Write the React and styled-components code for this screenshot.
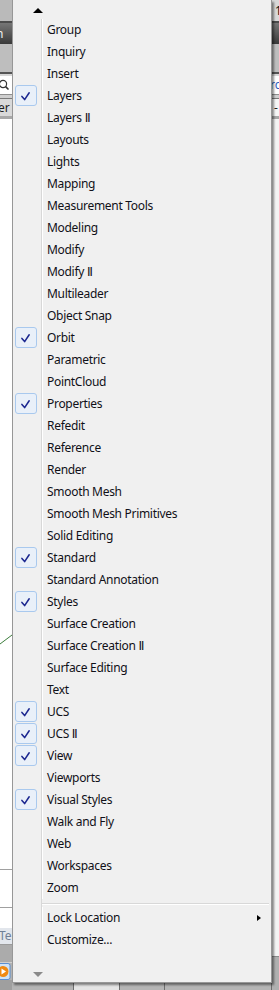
import styled, { createGlobalStyle } from 'styled-components'

const GlobalStyle = createGlobalStyle`
  html, body { margin: 0; padding: 0; background: #c4c4c4; }
  body { overflow: hidden; }
`

const Screen = styled.div`
  position: relative;
  width: 279px;
  height: 990px;
  display: flex;
  overflow: hidden;
  font-family: "Noto Sans", "DejaVu Sans", sans-serif;
`

const Strip = styled.div`
  width: ${p => p.$w}px;
  flex: none;
  display: flex;
  flex-direction: column;
  background: #fff;
  overflow: hidden;
`

const Band = styled.div`
  flex: ${p => (p.$h ? 'none' : '1')};
  height: ${p => (p.$h ? `${p.$h}px` : 'auto')};
  background: ${p => p.$bg || '#fff'};
  border-bottom: ${p => (p.$line ? `1px solid ${p.$line}` : 'none')};
  position: relative;
  overflow: hidden;
  display: flex;
  align-items: center;
  font-size: 12px;
  white-space: nowrap;
  color: ${p => p.$ink || '#222'};
`

const Clip = styled.span`
  margin-left: ${p => p.$shift || 0}px;
  line-height: 1;
`

const Middle = styled.div`
  flex: 1;
  display: flex;
  flex-direction: column;
`

const Workspace = styled.div`
  flex: 1;
  background: #fff;
`

const StatusBar = styled.div`
  height: 7px;
  display: flex;
  background: #b4b4b4;
`

const StatusCell = styled.div`
  width: ${p => p.$w}px;
  flex: ${p => (p.$w ? 'none' : '1')};
  background: ${p => p.$bg || '#b4b4b4'};
  border-right: 1px solid #6e6e6e;
`

const Menu = styled.div`
  position: absolute;
  left: 12px;
  top: 0;
  width: 260px;
  height: 983px;
  box-sizing: border-box;
  background: #f0f0f0;
  border: 1px solid #979797;
  border-top: none;
  box-shadow: 2px 2px 2px rgba(0, 0, 0, 0.45);
  display: flex;
  flex-direction: column;
  color: #101018;
`

const ScrollZone = styled.div`
  height: ${p => p.$h}px;
  flex: ${p => (p.$grow ? '1' : 'none')};
  display: flex;
  align-items: flex-start;
  padding-left: 20px;
  padding-top: ${p => p.$pad}px;
  box-sizing: border-box;
`

const Arrow = styled.div`
  width: 0;
  height: 0;
  border-left: 5px solid transparent;
  border-right: 5px solid transparent;
  ${p =>
    p.$up
      ? 'border-bottom: 5px solid #000;'
      : 'border-top: 5px solid #8a8a8a;'}
`

const List = styled.div`
  display: flex;
  flex-direction: column;
`

const Row = styled.div`
  height: ${p => p.$h || 22}px;
  display: flex;
`

const Gutter = styled.div`
  width: 28px;
  flex: none;
  border-right: 1px solid #d8d8d8;
  display: flex;
  align-items: flex-start;
`

const CheckBox = styled.div`
  margin-left: 2px;
  width: 22px;
  height: 21px;
  box-sizing: border-box;
  border: 1px solid #a9c9ee;
  border-radius: 3px;
  background: #e9f0f9;
  display: flex;
  align-items: center;
  justify-content: center;
`

const Label = styled.div`
  flex: 1;
  display: flex;
  align-items: center;
  padding-left: 5px;
  box-shadow: inset 1px 0 0 #fff;
  font-size: 12px;
  letter-spacing: -0.3px;
  line-height: 22px;
  white-space: nowrap;
`

const Text = styled.span`
  flex: 1;
`

const SubArrow = styled.div`
  width: 0;
  height: 0;
  margin-right: 10px;
  border-top: 3.5px solid transparent;
  border-bottom: 3.5px solid transparent;
  border-left: 4px solid #000;
`

const SepLine = styled.div`
  flex: 1;
  margin: 4px 2px 0 0;
  height: 0;
  border-top: 1px solid #d8d8d8;
  border-bottom: 1px solid #fff;
  box-shadow: inset 1px 0 0 #fff;
`

const items = [
  ['Group'], ['Inquiry'], ['Insert'], ['Layers', true], ['Layers Ⅱ'],
  ['Layouts'], ['Lights'], ['Mapping'], ['Measurement Tools'], ['Modeling'],
  ['Modify'], ['Modify Ⅱ'], ['Multileader'], ['Object Snap'], ['Orbit', true],
  ['Parametric'], ['PointCloud'], ['Properties', true], ['Refedit'], ['Reference'],
  ['Render'], ['Smooth Mesh'], ['Smooth Mesh Primitives'], ['Solid Editing'], ['Standard', true],
  ['Standard Annotation'], ['Styles', true], ['Surface Creation'], ['Surface Creation Ⅱ'], ['Surface Editing'],
  ['Text'], ['UCS', true], ['UCS Ⅱ', true], ['View', true], ['Viewports'],
  ['Visual Styles', true], ['Walk and Fly'], ['Web'], ['Workspaces'], ['Zoom'],
]

function Tick() {
  return (
    <svg width="22" height="21" viewBox="0 0 22 21">
      <path d="M6.5 11.5 L9.5 15 L14.5 7.5" fill="none" stroke="#1b2790" strokeWidth="1.7" strokeLinecap="round" strokeLinejoin="round" />
    </svg>
  )
}

function MenuRow({ label, checked, sub }) {
  return (
    <Row>
      <Gutter>{checked && <CheckBox><Tick /></CheckBox>}</Gutter>
      <Label>
        <Text>{label}</Text>
        {sub && <SubArrow />}
      </Label>
    </Row>
  )
}

function Magnifier() {
  return (
    <svg width="12" height="16" viewBox="0 0 12 16">
      <circle cx="3" cy="7" r="3.6" fill="none" stroke="#333" strokeWidth="1.2" />
      <path d="M5.6 9.6 L8.5 12.5" stroke="#333" strokeWidth="1.6" />
    </svg>
  )
}

function PlayIcon() {
  return (
    <svg width="12" height="17" viewBox="0 0 12 17">
      <rect x="-4" y="0.5" width="14" height="16" rx="2" fill="#cfe3f7" stroke="#5b8fd0" />
      <circle cx="3" cy="8.5" r="5.5" fill="#f08a12" />
      <path d="M1.5 5.5 L6 8.5 L1.5 11.5 Z" fill="#fff" />
    </svg>
  )
}

function GreenLine() {
  return (
    <svg width="12" height="24" viewBox="0 0 12 24" style={{ position: 'absolute', left: 0, top: 515 }}>
      <path d="M0 10 L12 1" stroke="#3c7d3c" strokeWidth="1" />
    </svg>
  )
}

export default function App() {
  return (
    <>
      <GlobalStyle />
      <Screen>
        <Strip $w={12}>
          <Band $h={21} $bg="#bababa" />
          <Band $h={2} $bg="#4c4c4c" />
          <Band $h={21} $bg="linear-gradient(#767676, #3a3a3a)" $ink="#f4f4f4">
            <Clip $shift={-4}>n</Clip>
          </Band>
          <Band $h={28} $bg="#bebebe" />
          <Band $h={2} $bg="#555" />
          <Band $h={2} $bg="#d6d6d6" />
          <Band $h={18} $bg="#fff" $line="#8e8e8e">
            <Magnifier />
          </Band>
          <Band $h={3} $bg="#cfcfcf" $line="#7a7a7a" />
          <Band $h={17} $bg="#d9d9d9" $ink="#1e1e1e">
            <Clip $shift={-2}>er</Clip>
          </Band>
          <Band $h={3} $bg="#a8a8a8" />
          <Band $h={750} $bg="#fff" $line="#a0a0a0">
            <GreenLine />
          </Band>
          <Band $h={37} $bg="#fff" $line="#a0a0a0" />
          <Band $h={20} $bg="#fff" />
          <Band $h={16} $bg="#e2e6ec" $ink="#6f7f96" $line="#9a9a9a">
            <Clip $shift={-1}>Ter</Clip>
          </Band>
          <Band $h={17} $bg="#ababab" $line="#d0d0d0" />
          <Band $h={17} $bg="#b2b2b2">
            <PlayIcon />
          </Band>
          <Band $bg="#9f9f9f" />
        </Strip>
        <Middle>
          <Workspace />
          <StatusBar>
            <StatusCell $w={61} />
            <StatusCell $w={45} $bg="#e4e4e4" />
            <StatusCell $w={44} />
            <StatusCell />
          </StatusBar>
        </Middle>
        <Strip $w={7}>
          <Band $h={21} $bg="#d8d8d8" $ink="#111">
            <Clip $shift={3}>1</Clip>
          </Band>
          <Band $h={2} $bg="#4c4c4c" />
          <Band $h={21} $bg="linear-gradient(#767676, #3a3a3a)" />
          <Band $h={28} $bg="#bebebe" />
          <Band $h={2} $bg="#555" />
          <Band $h={2} $bg="#d6d6d6" />
          <Band $h={18} $bg="#fff" $ink="#2f5fc0" $line="#8e8e8e">
            <Clip $shift={-2}>rc</Clip>
          </Band>
          <Band $h={3} $bg="#cfcfcf" $line="#7a7a7a" />
          <Band $h={17} $bg="#f6f6f6" $ink="#222">
            <Clip $shift={2}>-</Clip>
          </Band>
          <Band $h={3} $bg="#a8a8a8" />
          <Band $h={837} $bg="#f4f4f4" $line="#8a8a8a" />
          <Band $bg="#b0b0b0" />
        </Strip>
        <Menu>
          <ScrollZone $h={19} $pad={8}>
            <Arrow $up />
          </ScrollZone>
          <List>
            {items.map(([label, checked]) => (
              <MenuRow key={label} label={label} checked={checked} />
            ))}
            <Row $h={8}>
              <Gutter />
              <SepLine />
            </Row>
            <MenuRow label="Lock Location" sub />
            <MenuRow label="Customize..." />
          </List>
          <ScrollZone $grow $pad={21}>
            <Arrow />
          </ScrollZone>
        </Menu>
      </Screen>
    </>
  )
}
